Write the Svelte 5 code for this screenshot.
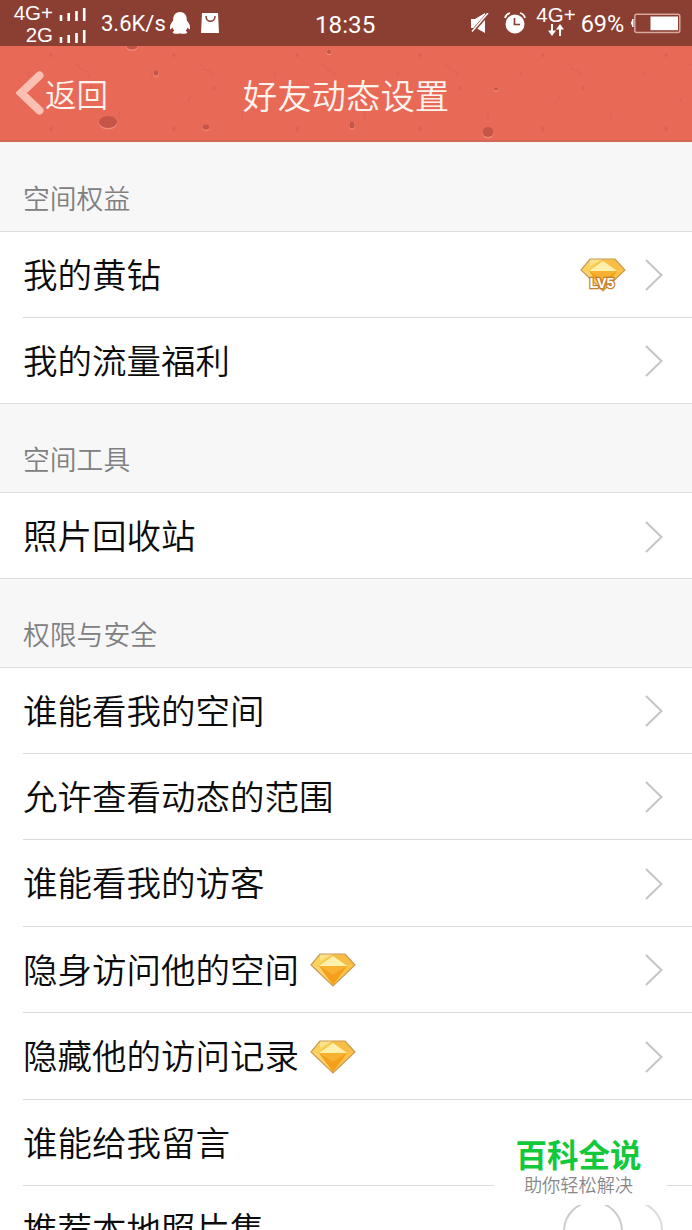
<script>
	const groups = [
		{
			title: '空间权益',
			items: [{ label: '我的黄钻', level: 'LV5' }, { label: '我的流量福利' }]
		},
		{
			title: '空间工具',
			items: [{ label: '照片回收站' }]
		},
		{
			title: '权限与安全',
			items: [
				{ label: '谁能看我的空间' },
				{ label: '允许查看动态的范围' },
				{ label: '谁能看我的访客' },
				{ label: '隐身访问他的空间', diamond: true },
				{ label: '隐藏他的访问记录', diamond: true },
				{ label: '谁能给我留言', plain: true },
				{ label: '推荐本地照片集', toggle: true }
			]
		}
	];

	// specks in the header texture: x, y, rx, ry
	const holes = [
		[108, 76, 9.5, 6.5],
		[206, 81, 4, 3],
		[156, 27, 2.8, 3.2],
		[132, 0, 6, 4],
		[329, 6, 2.5, 2.5],
		[352, 79, 3, 4],
		[496, 43, 2.5, 2],
		[488, 86, 6, 5.5]
	];
	const dots = [51, 174, 297, 420, 543, 666];
</script>

{#snippet gem(level)}
	<svg class="gem" width="46" height="36" viewBox="0 0 46 36">
		<path d="M10 2h25l10 11-22 21L1 13z" fill="#f9c648" />
		<path d="M10 2h12L9 13H1z" fill="#fbd25d" />
		<path d="M10 2h13L10 9z" fill="#fde28c" />
		<path d="M35 2l10 11h-9L22 3z" fill="#f8bd45" />
		<path d="M23 4 37 14H9z" fill="#fff0ae" />
		<path d="M1 13l8 1 14 20z" fill="#fcd46d" />
		<path d="M45 13l-8 1-14 20z" fill="#fdc347" />
		<path d="M9 14h28L23 33z" fill="#f49e19" />
		<path d="M9 14h28L23 23z" fill="#f8b232" />
		<path d="M10 2h25l10 11-22 21L1 13z" fill="none" stroke="#c99a55" stroke-width="1.2" />
		{#if level}
			<text x="22" y="31" textLength="25" lengthAdjust="spacingAndGlyphs">{level}</text>
		{/if}
	</svg>
{/snippet}

{#snippet bars()}
	<svg width="28" height="14" viewBox="0 0 28 14">
		<path d="M2 7v6M9.700 5v8M17.500 3v10M25.200 0v13" stroke="#fff" stroke-width="2.600" />
	</svg>
{/snippet}

<div class="screen">
	<div class="status">
		<div class="networks">
			<div class="network"><span>4G+</span>{@render bars()}</div>
			<div class="network"><span>2G</span>{@render bars()}</div>
		</div>
		<span class="speed">3.6K/s</span>
		<svg class="penguin" width="22" height="22" viewBox="0 0 22 22" fill="#fff">
			<path d="M11 0C6 0 4 4 4.200 8.500 2 11 .4 14 1 17c.5 1 1.500 0 2.400-1.500.4 1.400 1 2.500 2 3.300C3.500 19.500 3 21 5 21.500c2 .5 5 .2 6-.3 1 .5 4 .8 6 .3 2-.5 1.500-2-.4-2.700 1-.8 1.600-1.900 2-3.300C19.500 17 20.500 18 21 17c.6-3-1-6-3.200-8.500C18 4 16 0 11 0z" />
		</svg>
		<svg class="bag" width="18" height="20" viewBox="0 0 18 20">
			<path d="M1 0h16l1 20H0z" fill="#fff" />
			<path d="M5 3c0 7 9 7 9 0" fill="none" stroke="#8b3e32" stroke-width="1.500" />
		</svg>
		<span class="clock">18:35</span>
		<div class="indicators">
			<svg class="mute" width="18" height="20" viewBox="0 0 18 20">
				<path d="M0 6h4l10-6v20L5 15H0z" fill="#fff" />
				<path d="M1 19 17 1" stroke="#8b3e32" stroke-width="3.600" />
				<path d="M1 18.500 17 0" stroke="#fff" stroke-width="1.500" />
			</svg>
			<svg class="alarm" width="22" height="22" viewBox="0 0 22 22">
				<circle cx="11" cy="12" r="9.500" fill="#fff" />
				<path d="M1 6q1-4 5-5M21 6q-1-4-5-5" fill="none" stroke="#fff" stroke-width="1.800" />
				<path d="M10.500 6v6.500H16" fill="none" stroke="#8b3e32" stroke-width="1.700" />
			</svg>
			<div class="mobile">
				<span>4G+</span>
				<svg width="16" height="12" viewBox="0 0 16 12">
					<path d="M4 0v8M12 4v8" stroke="#fff" stroke-width="2" />
					<path d="M0 6.500h8L4 12zM8 5.500h8L12 0z" fill="#fff" />
				</svg>
			</div>
			<span class="percent">69%</span>
			<svg class="battery" width="51" height="21" viewBox="0 0 51 21">
				<path d="M3 6Q0 10 3 14z" fill="#fff" stroke="#fff" />
				<rect x="4.800" y="1.200" width="45" height="18.300" rx="2" fill="none" stroke="#d8a79d" stroke-width="1.500" />
				<path d="M20.500 3.500H48v13.700H20.500z" fill="#fff" />
			</svg>
		</div>
	</div>

	<header>
		<svg class="texture" width="692" height="96" viewBox="0 0 692 96">
			{#each dots as x}
				<g class="grain">
					<ellipse cx={x} cy="9" rx="1.500" ry="2" />
					<ellipse cx={x} cy="83" rx="1.500" ry="2.500" />
					<ellipse cx={x + 40} cy="42" rx="1.200" ry="2" />
					<path d="M{x + 24} 18q5 1 5 5l6 2q3 2 3 6" />
					<path d="M{x - 22} 26v5M{x + 17} 50l-3 6M{x + 68} 65v8" />
				</g>
			{/each}
			{#each holes as [x, y, rx, ry]}
				<ellipse cx={x} cy={y + 0.8} {rx} {ry} fill="#f28a76" />
				<ellipse cx={x} cy={y} rx={rx - 0.4} ry={ry - 0.4} fill="#c45547" />
			{/each}
		</svg>
		<div class="back">
			<svg width="28" height="44" viewBox="0 0 28 44">
				<path d="M23.500 4.500 5 22l18.500 17.500" fill="none" stroke="#fbc0b3" stroke-width="8" stroke-linecap="round" />
			</svg>
			<span>返回</span>
		</div>
		<h1>好友动态设置</h1>
	</header>

	{#each groups as group}
		<h2>{group.title}</h2>
		<ul>
			{#each group.items as item}
				<li>
					<span class="label">{item.label}</span>
					{#if item.diamond}{@render gem()}{/if}
					<span class="spacer"></span>
					{#if item.level}{@render gem(item.level)}{/if}
					{#if item.toggle}
						<span class="toggle"></span>
					{:else if !item.plain}
						<svg class="arrow" width="18" height="32" viewBox="0 0 18 32">
							<path d="m1 1 15.500 15L1 31" fill="none" stroke="#c5c5c8" stroke-width="2" />
						</svg>
					{/if}
				</li>
			{/each}
		</ul>
	{/each}

	<div class="brand">
		<strong>百科全说</strong>
		<span>助你轻松解决</span>
	</div>
</div>

<style>
	:global(body) {
		margin: 0;
	}
	.screen {
		position: relative;
		width: 692px;
		height: 1230px;
		overflow: hidden;
		background: #f7f7f8;
		font-family: 'Noto Sans CJK SC', sans-serif;
		font-weight: 350;
	}
	svg {
		display: block;
		flex: none;
	}
	.status {
		display: flex;
		align-items: center;
		height: 46px;
		box-sizing: border-box;
		padding: 0 11px;
		background: #8b3e32;
		color: #fff;
		font-family: Roboto, sans-serif;
		font-weight: 400;
		white-space: nowrap;
	}
	.networks {
		width: 76px;
		padding-top: 5px;
	}
	.network {
		display: flex;
		align-items: center;
		justify-content: flex-end;
		gap: 6px;
		height: 22px;
		font-family: 'Liberation Sans', sans-serif;
		font-size: 20.5px;
		line-height: 20px;
	}
	.network span {
		padding-bottom: 3px;
	}
	.speed {
		width: 68px;
		padding-left: 14px;
		font-size: 22px;
	}
	.bag {
		margin-left: 10px;
	}
	.clock {
		margin-left: 96px;
		font-size: 24.2px;
		padding-top: 3px;
	}
	.indicators {
		display: flex;
		flex: 1;
		align-items: center;
		justify-content: flex-end;
	}
	.alarm {
		margin-left: 14px;
	}
	.mobile {
		display: flex;
		flex-direction: column;
		align-items: center;
		margin: -5px 0 0 10px;
		font-family: 'Liberation Sans', sans-serif;
		font-size: 20.5px;
		line-height: 20px;
	}
	.mobile svg {
		margin-top: -1px;
	}
	.percent {
		margin: 2px 6px 0 5px;
		font-size: 23.5px;
		letter-spacing: -0.1px;
	}
	.mute {
		margin-right: 1px;
	}
	header {
		position: relative;
		display: grid;
		grid-template-columns: 1fr auto 1fr;
		align-items: center;
		height: 96px;
		box-sizing: border-box;
		border-bottom: 2px solid #d16757;
		background: #e96957;
		color: #fff3ee;
	}
	.texture {
		position: absolute;
		inset: 0;
	}
	.grain {
		fill: #d96352;
	}
	.grain path {
		fill: none;
		stroke: #de6453;
		stroke-width: 1.2px;
	}
	.back {
		position: relative;
		display: flex;
		align-items: center;
		padding-left: 16px;
		font-size: 31.5px;
		line-height: 44px;
	}
	.back span {
		margin: -1px 0 0 1px;
	}
	h1 {
		position: relative;
		margin: 2px 0 0;
		font-size: 34.4px;
		font-weight: 350;
		line-height: 48px;
	}
	h2 {
		display: flex;
		align-items: flex-end;
		height: 89px;
		margin: 0;
		box-sizing: border-box;
		padding: 0 23px 13px;
		color: #808083;
		font-size: 26.8px;
		font-weight: 350;
		line-height: 40px;
	}
	ul {
		margin: 0 0 -1px;
		padding: 0;
		border-top: 1px solid #dedee0;
		border-bottom: 1px solid #dedee0;
		background: #fff;
		list-style: none;
	}
	li {
		display: flex;
		align-items: center;
		height: 86.5px;
		box-sizing: border-box;
		margin-left: 23px;
		padding: 2px 29px 0 0;
		color: #0c0c0d;
		font-size: 34.5px;
		line-height: 50px;
	}
	li:first-child {
		height: 84.7px;
	}
	li + li {
		border-top: 1px solid #dadadc;
	}
	.label {
		padding-bottom: 5px;
	}
	.label + .gem {
		margin-left: 11px;
	}
	.spacer {
		flex: 1;
	}
	.gem + .arrow {
		margin-left: 19px;
	}
	.gem text {
		fill: #fff;
		stroke: #c4812d;
		stroke-width: 2.6px;
		paint-order: stroke;
		text-anchor: middle;
		font: bold 15px 'Liberation Sans', sans-serif;
	}
	.toggle {
		position: relative;
		width: 98px;
		height: 58px;
		border: 2px solid #dcdcde;
		border-radius: 31px;
		box-sizing: border-box;
	}
	.toggle::before {
		position: absolute;
		top: -2px;
		left: -4px;
		width: 56px;
		height: 56px;
		border: 2px solid #ccccce;
		border-radius: 50%;
		background: #fff;
		content: '';
	}
	.brand {
		position: absolute;
		left: 494px;
		top: 1132px;
		display: flex;
		flex-direction: column;
		align-items: center;
		width: 169px;
		height: 73px;
		padding-right: 4px;
		background: #fff;
		white-space: nowrap;
	}
	.brand strong {
		color: #14c83c;
		font-size: 31.5px;
		font-weight: 700;
		line-height: 43px;
	}
	.brand span {
		color: #88888a;
		font-size: 18.2px;
		line-height: 19px;
	}
</style>
